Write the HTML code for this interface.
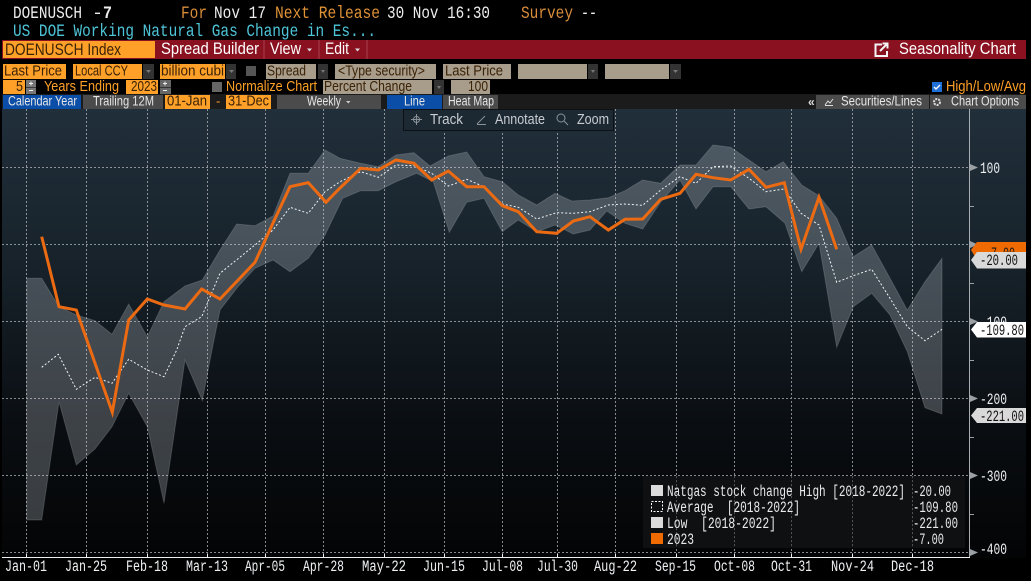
<!DOCTYPE html>
<html><head><meta charset="utf-8"><style>
html,body{margin:0;padding:0;background:#000;width:1031px;height:581px;overflow:hidden}
svg{display:block}
text{font-family:"Liberation Sans",sans-serif;white-space:pre}
.m{font-family:"Liberation Mono",monospace}
.t{font-size:16.500px;fill:#fff}
.b{font-size:15px;fill:#3a2206}
.s{font-size:13.500px;fill:#e6e6e6}
.n{font-size:15px;fill:#ffa028}
.tb{font-size:15px;fill:#c8ccd0}
.ax{font-family:"Liberation Mono",monospace;font-size:15.500px;fill:#eef0f2}
.lg{font-family:"Liberation Mono",monospace;font-size:15.500px;fill:#e8eaec}
.tan{fill:#a89c8a}
.arr{fill:#333}
.ar{fill:#777}
.or{fill:#ffa028}
</style></head><body>
<svg width="1031" height="581" viewBox="0 0 1031 581" xmlns="http://www.w3.org/2000/svg">
<defs><linearGradient id="g" x1="0" y1="0" x2="0" y2="1"><stop offset="0" stop-color="#212f3b"/><stop offset=".35" stop-color="#17222a"/><stop offset=".7" stop-color="#0a0e12"/><stop offset="1" stop-color="#030405"/></linearGradient></defs>
<rect width="1031" height="581" fill="#000"/>

<!-- header -->
<g font-size="17.500">
<text x="13" y="18" fill="#eee" class="m" textLength="69" lengthAdjust="spacingAndGlyphs">DOENUSCH</text>
<text x="92" y="18" fill="#eee" class="m" textLength="11" lengthAdjust="spacingAndGlyphs">-</text>
<text x="103" y="18" fill="#eee" class="m" font-weight="bold" textLength="9" lengthAdjust="spacingAndGlyphs">7</text>
<text x="181" y="18" fill="#d98d3a" class="m" textLength="26" lengthAdjust="spacingAndGlyphs">For</text>
<text x="214" y="18" fill="#eee" class="m" textLength="52" lengthAdjust="spacingAndGlyphs">Nov 17</text>
<text x="275" y="18" fill="#e09236" class="m" textLength="105" lengthAdjust="spacingAndGlyphs">Next Release</text>
<text x="387" y="18" fill="#eee" class="m" textLength="103" lengthAdjust="spacingAndGlyphs">30 Nov 16:30</text>
<text x="521" y="18" fill="#d98d3a" class="m" textLength="52" lengthAdjust="spacingAndGlyphs">Survey</text>
<text x="581" y="18" fill="#eee" class="m" textLength="16" lengthAdjust="spacingAndGlyphs">--</text>
<text x="13" y="36" fill="#4ec5d8" class="m" textLength="363" lengthAdjust="spacingAndGlyphs">US DOE Working Natural Gas Change in Es...</text>
</g>

<!-- red bar -->
<rect x="2" y="40" width="1024" height="19" fill="#8a1120"/>
<rect x="3" y="41" width="152" height="17" fill="#ffa028"/>
<text x="5" y="55" class="t" style="fill:#3a2206" textLength="116" lengthAdjust="spacingAndGlyphs">DOENUSCH Index</text>
<rect x="263.500" y="40" width="1" height="19" fill="#c9707a" opacity=".5"/>
<rect x="318.500" y="40" width="1" height="19" fill="#c9707a" opacity=".5"/>
<rect x="366.500" y="40" width="1" height="19" fill="#c9707a" opacity=".5"/>
<text x="161" y="54" class="t" textLength="98" lengthAdjust="spacingAndGlyphs">Spread Builder</text>
<text x="270" y="54" class="t" textLength="31" lengthAdjust="spacingAndGlyphs">View</text>
<path d="M307 48.500h5l-2.500 3z" fill="#ddd"/>
<text x="325" y="54" class="t" textLength="24" lengthAdjust="spacingAndGlyphs">Edit</text>
<path d="M355 48.500h5l-2.500 3z" fill="#ddd"/>
<path d="M882 44.500h-6.500v11.500h11.500v-5" fill="none" stroke="#f4f4f4" stroke-width="2"/>
<path d="M880 51l7-7m-4.500-.5h5v5" fill="none" stroke="#f4f4f4" stroke-width="2"/>
<text x="899" y="54" class="t" textLength="117" lengthAdjust="spacingAndGlyphs">Seasonality Chart</text>

<!-- row 3 -->
<rect class="or" x="3" y="64" width="63" height="15"/>
<text x="4" y="75.500" class="b" textLength="58" lengthAdjust="spacingAndGlyphs">Last Price</text>
<rect class="or" x="73" y="64" width="69" height="15"/>
<text x="75" y="75.500" class="b" textLength="53" lengthAdjust="spacingAndGlyphs">Local CCY</text>
<rect class="arr" x="143" y="64" width="11" height="15"/><path class="ar" d="M146 70h5l-2.500 3z"/>
<rect class="or" x="160" y="64" width="65" height="15"/>
<text x="161" y="75.500" class="b" textLength="63" lengthAdjust="spacingAndGlyphs">billion cubi</text>
<rect class="arr" x="226" y="64" width="10" height="15"/><path class="ar" d="M229 70h5l-2.500 3z"/>
<rect x="246" y="66" width="10" height="10" fill="#555"/>
<rect class="tan" x="266" y="64" width="50" height="15"/>
<text x="267" y="75.500" class="b" textLength="39" lengthAdjust="spacingAndGlyphs">Spread</text>
<rect class="arr" x="318" y="64" width="10" height="15"/><path class="ar" d="M321 70h4l-2 3z"/>
<rect class="tan" x="335" y="64" width="101" height="15"/>
<text x="338" y="75.500" class="b" textLength="87" lengthAdjust="spacingAndGlyphs">&lt;Type security&gt;</text>
<rect class="tan" x="443" y="64" width="68" height="15"/>
<text x="445" y="75.500" class="b" textLength="58" lengthAdjust="spacingAndGlyphs">Last Price</text>
<rect class="tan" x="518" y="64" width="69" height="15"/>
<rect class="arr" x="588" y="64" width="10" height="15"/><path class="ar" d="M591 70h4l-2 3z"/>
<rect class="tan" x="605" y="64" width="64" height="15"/>
<rect class="arr" x="670" y="64" width="11" height="15"/><path class="ar" d="M673 70h5l-2.500 3z"/>

<!-- row 4 -->
<rect class="or" x="3" y="80" width="22" height="14"/>
<text x="16" y="91" class="b" textLength="7" lengthAdjust="spacingAndGlyphs">5</text>
<rect x="26" y="80" width="10" height="7" fill="#777"/><rect x="26" y="87.500" width="10" height="6.500" fill="#777"/>
<path d="M29 83.500h4M31 81.500v4M29 90.500h4" stroke="#eee" fill="none"/>
<text x="44" y="91" class="n" textLength="75" lengthAdjust="spacingAndGlyphs">Years Ending</text>
<rect class="or" x="126" y="80" width="32" height="14"/>
<text x="131" y="91" class="b" textLength="26" lengthAdjust="spacingAndGlyphs">2023</text>
<rect x="160" y="80" width="11" height="7" fill="#666"/><rect x="160" y="87.500" width="11" height="6.500" fill="#666"/>
<path d="M163 83.500h4M165 81.500v4M163 90.500h4" stroke="#eee" fill="none"/>
<rect x="212" y="82" width="10" height="10" fill="#666"/>
<text x="226" y="91" class="n" textLength="91" lengthAdjust="spacingAndGlyphs">Normalize Chart</text>
<rect class="tan" x="323" y="80" width="109" height="14"/>
<text x="324" y="91" class="b" textLength="88" lengthAdjust="spacingAndGlyphs">Percent Change</text>
<rect class="arr" x="434" y="80" width="10" height="14"/><path class="ar" d="M437 86h4l-2 3z"/>
<rect class="tan" x="451" y="80" width="39" height="14"/>
<text x="468" y="91" class="b" textLength="20" lengthAdjust="spacingAndGlyphs">100</text>
<rect x="932" y="82" width="10" height="10" fill="#1e6fd8"/><path d="M934 87l2 2 4-4" stroke="#fff" stroke-width="1.400" fill="none"/>
<text x="946" y="91" class="n" textLength="80" lengthAdjust="spacingAndGlyphs">High/Low/Avg</text>

<!-- row 5 -->
<rect x="2" y="94" width="1024" height="15" fill="#1b1b1b"/>
<rect x="3" y="95" width="78" height="14" fill="#0b4ea8"/>
<text x="8" y="105.500" class="s" textLength="69" lengthAdjust="spacingAndGlyphs">Calendar Year</text>
<rect x="83" y="95" width="80" height="14" fill="#4b4b4b"/>
<text x="93" y="105.500" class="s" textLength="61" lengthAdjust="spacingAndGlyphs">Trailing 12M</text>
<rect class="or" x="165" y="95" width="45" height="14"/>
<text x="167" y="105.500" class="b" textLength="40" lengthAdjust="spacingAndGlyphs">01-Jan</text>
<text x="216" y="105.500" font-size="13" fill="#ffa028">-</text>
<rect class="or" x="226" y="95" width="45" height="14"/>
<text x="228" y="105.500" class="b" textLength="41" lengthAdjust="spacingAndGlyphs">31-Dec</text>
<rect x="277" y="95" width="104" height="14" fill="#4b4b4b"/>
<text x="307" y="105.500" class="s" textLength="34" lengthAdjust="spacingAndGlyphs">Weekly</text>
<path d="M346 101h4.500l-2.200 2.500z" fill="#ccc"/>
<rect x="387" y="95" width="55" height="14" fill="#0b4ea8"/>
<text x="404" y="105.500" class="s" textLength="21" lengthAdjust="spacingAndGlyphs">Line</text>
<rect x="443" y="95" width="55" height="14" fill="#4b4b4b"/>
<text x="448" y="105.500" class="s" textLength="46" lengthAdjust="spacingAndGlyphs">Heat Map</text>
<text x="808" y="106" font-size="12" fill="#ddd" font-weight="bold">«</text>
<rect x="816" y="95" width="113" height="14" fill="#4b4b4b"/>
<path d="M825 105l3-4 2 2 3-4M825 105.500h8" stroke="#ddd" fill="none" stroke-width="1"/>
<text x="841" y="105.500" class="s" textLength="81" lengthAdjust="spacingAndGlyphs">Securities/Lines</text>
<rect x="930" y="95" width="96" height="14" fill="#4b4b4b"/>
<circle cx="937" cy="102" r="3" fill="none" stroke="#ddd" stroke-width="2" stroke-dasharray="2 1"/>
<text x="951" y="105.500" class="s" textLength="68" lengthAdjust="spacingAndGlyphs">Chart Options</text>

<!-- plot -->
<rect x="2" y="109" width="1024" height="449" fill="url(#g)"/>
<rect x="2" y="558" width="1024" height="23" fill="#000"/>

<!-- grid -->
<g stroke="#b8bcc0" stroke-width="1" stroke-dasharray="2 2" opacity=".72">
<path d="M26.500 109V557M86.500 109V557M147.500 109V557M207.500 109V557M265.500 109V557M323.500 109V557M384.500 109V557M444.500 109V557M502.500 109V557M557.500 109V557M615.500 109V557M676.500 109V557M734.500 109V557M791.500 109V557M852.500 109V557M912.500 109V557"/>
<path d="M2 167.500H969M2 244.500H969M2 321.500H969M2 398.500H969M2 475.500H969M2 552.500H969"/>
</g>

<!-- band -->
<path fill="#c8d0d8" fill-opacity=".27" stroke="#d8dde0" stroke-opacity=".18" d="M26.700 278.300L41.700 278.300L59 306.700L76.300 315L95 320.700L112 334.300L128.700 304L147.300 336.700L164 301.700L185 286L202.300 280L220 250L236.700 224L255 225.700L273 216L290 173.300L308.300 173.300L325 150L340 158.300L360.700 163.300L378.300 166.700L396 155L414 152.700L430 166L448.300 156L466.700 152L484 176.700L502.300 181.700L518.300 195L536.700 205L555 193.300L571.700 201L590 200L608.300 197.700L625 190.700L642.700 180L660.700 183.300L680 165L696 165L713 145L730.700 147.300L749 160L766 171.700L783.300 161.700L801.700 185L819 195.700L836.700 218.300L853.300 256.700L871.700 245L890 278.300L907.300 310L925 281.700L942 258.300L942 414L925 407.700L907.300 351.700L890 315L871.700 293.300L853.300 306.700L836.700 347.300L819 243.300L801.700 271.700L785 223.300L766 206.700L749 209L730.700 186.700L713 186.700L696 209L680 180L660.700 202L642.700 229L625 223.300L606.700 211L590 230L573.300 234L555 225L536.700 231.700L518.300 220L502.300 231.700L484 198.300L466.700 202.300L449.300 232.300L433.300 181.700L416.700 173.300L396 181.700L378.300 190.700L360.700 190.700L342.700 198.300L325 235L308.300 258.300L290 271.700L273 260L255 268.300L238 286.700L220 310L212 350L202.300 400.700L185 360L164 503.300L147.300 426.700L128.700 393.300L112 426.700L95 449L76.300 465L59 401.700L41.700 520L26.700 520Z"/>

<!-- average -->
<polyline fill="none" stroke="#eef2f4" stroke-width="1" stroke-dasharray="2 2" points="41.700,367.300 58.300,354.300 76.300,389.300 95,377.300 112,383.300 128.700,359.300 147.300,370 164,376.700 176.700,350 185,326.700 201.700,316.700 220,273.300 255,245 273,230 290,207.300 308.300,213.300 325,191.700 340,181.700 360.700,171.700 378.300,177.300 396,165 414,165.700 431.700,173.300 448.300,186 466.700,179.300 484,186.700 502.300,204 518.300,207.300 536.700,219 556.700,212.700 573.300,213.300 590,211.700 608.300,205 625,204 642.700,205.300 660.700,190 680,176.700 696,183.300 713,166.700 730.700,166 749,178.300 766,191.700 784.300,189 801,213.300 819,225 836.700,282.300 853.300,275.700 871.700,269.300 890,298.300 907.300,326.700 925,340.700 942,329.300"/>

<!-- 2023 -->
<polyline fill="none" stroke="#ec6a12" stroke-width="3" stroke-linejoin="miter" points="41.700,236.700 59,306.700 76.300,310 112.300,412.300 128.700,320 147.300,299 164,305 185,309 201.700,289 220,299 255,262.300 273,223 290,186.700 308.300,182.700 326,202.300 340,188 360.700,168.300 378.300,170 396,160 414,163.300 431.700,180 448.300,171 466.700,186.700 484,186.700 502.300,205.700 518.300,211.700 536.700,231.700 556.700,233.300 573.300,221 590,216.700 608.300,230 625,219.300 642.700,219 660.700,199.300 680,193.300 696,174.300 713,177.700 730.700,180 749,169.300 766,187.300 784.300,182.700 801,249.300 819,197.300 836.700,249.300"/>

<!-- toolbar -->
<rect x="403.500" y="109.500" width="210" height="21" fill="#1c2933" stroke="#0c1116"/>
<path d="M411 119.500h11M416.500 114v11" stroke="#8a9298" stroke-width="1" fill="none"/><circle cx="416.500" cy="119.500" r="3" fill="none" stroke="#8a9298"/>
<text x="430" y="124" class="tb" textLength="33" lengthAdjust="spacingAndGlyphs">Track</text>
<path d="M477 124l8-8M477 124.500h9" stroke="#8a9298" fill="none"/>
<text x="495" y="124" class="tb" textLength="50" lengthAdjust="spacingAndGlyphs">Annotate</text>
<circle cx="561" cy="118" r="4" fill="none" stroke="#8a9298"/><path d="M564 121l4 4" stroke="#8a9298"/>
<text x="577" y="124" class="tb" textLength="32" lengthAdjust="spacingAndGlyphs">Zoom</text>

<!-- legend -->
<rect x="643" y="476" width="322" height="72" fill="#0f1113" fill-opacity=".92"/>
<g stroke="#aab0b5" stroke-dasharray="2 2" opacity=".4"><path d="M676.500 476V548M734.500 476V548M791.500 476V548M852.500 476V548M912.500 476V548"/></g>
<rect x="651" y="485" width="12" height="11" fill="#dcdcdc"/>
<rect x="651.500" y="501.500" width="11" height="10" fill="none" stroke="#fff" stroke-dasharray="2 1.500"/>
<rect x="651" y="517" width="12" height="11" fill="#dcdcdc"/>
<rect x="651" y="533" width="12" height="11" fill="#ef6a00"/>
<text class="lg" x="667" y="496" textLength="238" lengthAdjust="spacingAndGlyphs">Natgas stock change High [2018-2022]</text>
<text class="lg" x="667" y="512" textLength="133" lengthAdjust="spacingAndGlyphs">Average  [2018-2022]</text>
<text class="lg" x="667" y="528" textLength="109" lengthAdjust="spacingAndGlyphs">Low  [2018-2022]</text>
<text class="lg" x="667" y="544" textLength="27" lengthAdjust="spacingAndGlyphs">2023</text>
<text class="lg" x="913" y="496" textLength="38" lengthAdjust="spacingAndGlyphs">-20.00</text>
<text class="lg" x="913" y="512" textLength="45" lengthAdjust="spacingAndGlyphs">-109.80</text>
<text class="lg" x="913" y="528" textLength="45" lengthAdjust="spacingAndGlyphs">-221.00</text>
<text class="lg" x="913" y="544" textLength="31" lengthAdjust="spacingAndGlyphs">-7.00</text>

<!-- axes -->
<path d="M969.500 109V557" fill="none" stroke="#a8adb1" stroke-width="1"/>
<path d="M2 557.500H970" fill="none" stroke="#eceff1" stroke-width="1"/>
<path d="M26.500 558v-4M86.500 558v-4M147.500 558v-4M207.500 558v-4M265.500 558v-4M323.500 558v-4M384.500 558v-4M444.500 558v-4M502.500 558v-4M557.500 558v-4M615.500 558v-4M676.500 558v-4M734.500 558v-4M791.500 558v-4M852.500 558v-4M912.500 558v-4" stroke="#eceff1"/>
<path d="M970 206.500h4M970 283.500h4M970 360.500h4M970 437.500h4M970 514.500h4" stroke="#99a0a5"/>
<path d="M970 164l8 3.500-8 3.500zM970 241l8 3.500-8 3.500zM970 318l8 3.500-8 3.500zM970 395l8 3.500-8 3.500zM970 472l8 3.500-8 3.500zM970 549l8 3.500-8 3.500z" fill="#9aa0a4"/>
<text class="ax" x="980" y="173" textLength="20" lengthAdjust="spacingAndGlyphs">100</text>
<text class="ax" x="980" y="327" textLength="27" lengthAdjust="spacingAndGlyphs">-100</text>
<text class="ax" x="980" y="404" textLength="27" lengthAdjust="spacingAndGlyphs">-200</text>
<text class="ax" x="980" y="481" textLength="27" lengthAdjust="spacingAndGlyphs">-300</text>
<text class="ax" x="980" y="554" textLength="27" lengthAdjust="spacingAndGlyphs">-400</text>

<!-- value flags -->
<path d="M971 250l6-8H1026V260H977z" fill="#ef6a00"/>
<text x="985" y="258" class="m" font-size="16" fill="#1a1a1a" textLength="30" lengthAdjust="spacingAndGlyphs">-7.00</text>
<path d="M971 260l6-8H1026V268.500H977z" fill="#d9d9d9"/>
<text x="980" y="265" class="m" font-size="16" fill="#111" textLength="38" lengthAdjust="spacingAndGlyphs">-20.00</text>
<path d="M971 329.500l6-7.500H1026V337.500H977z" fill="#fff"/>
<text x="980" y="335" class="m" font-size="16" fill="#111" textLength="44" lengthAdjust="spacingAndGlyphs">-109.80</text>
<path d="M971 415.500l6-7.500H1026V423H977z" fill="#d9d9d9"/>
<text x="980" y="421" class="m" font-size="16" fill="#111" textLength="44" lengthAdjust="spacingAndGlyphs">-221.00</text>

<!-- x labels -->
<text class="ax" x="5" y="571" textLength="42" lengthAdjust="spacingAndGlyphs">Jan-01</text>
<text class="ax" x="65" y="571" textLength="42" lengthAdjust="spacingAndGlyphs">Jan-25</text>
<text class="ax" x="126" y="571" textLength="42" lengthAdjust="spacingAndGlyphs">Feb-18</text>
<text class="ax" x="186" y="571" textLength="42" lengthAdjust="spacingAndGlyphs">Mar-13</text>
<text class="ax" x="245" y="571" textLength="40" lengthAdjust="spacingAndGlyphs">Apr-05</text>
<text class="ax" x="303" y="571" textLength="41" lengthAdjust="spacingAndGlyphs">Apr-28</text>
<text class="ax" x="362" y="571" textLength="44" lengthAdjust="spacingAndGlyphs">May-22</text>
<text class="ax" x="423" y="571" textLength="42" lengthAdjust="spacingAndGlyphs">Jun-15</text>
<text class="ax" x="482" y="571" textLength="41" lengthAdjust="spacingAndGlyphs">Jul-08</text>
<text class="ax" x="537" y="571" textLength="41" lengthAdjust="spacingAndGlyphs">Jul-30</text>
<text class="ax" x="594" y="571" textLength="43" lengthAdjust="spacingAndGlyphs">Aug-22</text>
<text class="ax" x="655" y="571" textLength="41" lengthAdjust="spacingAndGlyphs">Sep-15</text>
<text class="ax" x="714" y="571" textLength="41" lengthAdjust="spacingAndGlyphs">Oct-08</text>
<text class="ax" x="771" y="571" textLength="41" lengthAdjust="spacingAndGlyphs">Oct-31</text>
<text class="ax" x="831" y="571" textLength="43" lengthAdjust="spacingAndGlyphs">Nov-24</text>
<text class="ax" x="891" y="571" textLength="43" lengthAdjust="spacingAndGlyphs">Dec-18</text>
</svg>
</body></html>
